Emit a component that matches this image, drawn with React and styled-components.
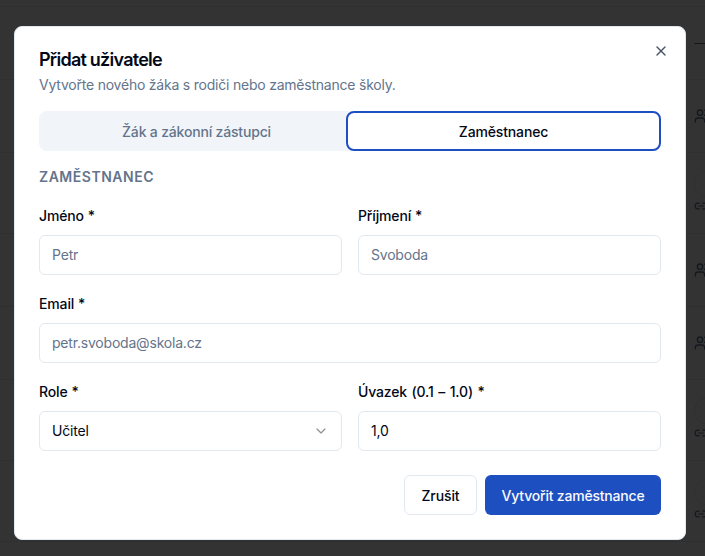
import styled, { createGlobalStyle } from "styled-components"
import { ChevronDown, Link2, Users, X } from "lucide-react"

const rows = [
	{ id: 1, height: 73, kind: "dash" },
	{ id: 2, height: 73, kind: "user" },
	{ id: 3, height: 81, kind: "link" },
	{ id: 4, height: 73, kind: "user" },
	{ id: 5, height: 73, kind: "user" },
	{ id: 6, height: 81, kind: "link" },
	{ id: 7, height: 81, kind: "link" },
]

function App() {
	return (
		<>
			<GlobalStyle />
			<Page>
				<TopRow />
				{rows.map((row) => (
					<Row key={row.id} $height={row.height}>
						{row.kind === "dash" && <Dash />}
						{row.kind === "user" && <Users size={16} strokeWidth={2} />}
						{row.kind === "link" && (
							<LinkCell>
								<Avatar />
								<Link2 size={14} strokeWidth={2} />
							</LinkCell>
						)}
					</Row>
				))}
			</Page>
			<Overlay />
			<Dialog>
				<CloseButton aria-label="Zavřít">
					<X size={16} strokeWidth={2} />
				</CloseButton>
				<Title>Přidat uživatele</Title>
				<Description>Vytvořte nového žáka s rodiči nebo zaměstnance školy.</Description>
				<Tabs>
					<Tab>Žák a zákonní zástupci</Tab>
					<ActiveTab>Zaměstnanec</ActiveTab>
				</Tabs>
				<SectionTitle>Zaměstnanec</SectionTitle>
				<FormGrid>
					<Field>
						<Label>Jméno *</Label>
						<Input placeholder="Petr" />
					</Field>
					<Field>
						<Label>Příjmení *</Label>
						<Input placeholder="Svoboda" />
					</Field>
					<WideField>
						<Label>Email *</Label>
						<Input placeholder="petr.svoboda@skola.cz" />
					</WideField>
					<Field>
						<Label>Role *</Label>
						<SelectBox>
							Učitel
							<ChevronDown size={16} strokeWidth={1.75} />
						</SelectBox>
					</Field>
					<Field>
						<Label $wordSpacing={1}>Úvazek (0.1 – 1.0) *</Label>
						<Input defaultValue="1,0" />
					</Field>
				</FormGrid>
				<Footer>
					<CancelButton>Zrušit</CancelButton>
					<SubmitButton>Vytvořit zaměstnance</SubmitButton>
				</Footer>
			</Dialog>
		</>
	)
}

export default App

const GlobalStyle = createGlobalStyle`
* {
	padding: 0;
	margin: 0;
	box-sizing: border-box;
}

html, body {
	height: 100%;
	overflow: hidden;
	background: #fff;
}

body {
	font-family: Inter, "Liberation Sans", sans-serif;
	color: #0f172a;
}

input, button {
	font-family: inherit;
}
`

const Page = styled.div`
	height: 556px;
	overflow: hidden;
	background: #fff;
`

const TopRow = styled.div`
	height: 7px;
	border-bottom: 1px solid #e2e8f0;
`

const Row = styled.div`
	height: ${(p) => p.$height}px;
	border-bottom: 1px solid #e2e8f0;
	padding-left: 694px;
	display: flex;
	align-items: center;
	color: #64748b;

	svg {
		flex-shrink: 0;
	}
`

const Dash = styled.div`
	width: 11px;
	height: 1px;
	background: #64748b;
`

const LinkCell = styled.div`
	flex-shrink: 0;
	margin-top: -4px;
	display: flex;
	flex-direction: column;
	gap: 1px;
`

const Avatar = styled.div`
	width: 28px;
	height: 28px;
	border: 1px solid #e2e8f0;
	border-radius: 50%;
`

const Overlay = styled.div`
	position: fixed;
	inset: 0;
	background: rgba(0, 0, 0, 0.8);
`

const Dialog = styled.div`
	position: fixed;
	left: 14px;
	top: 26px;
	width: 672px;
	height: 514px;
	background: #fff;
	border: 1px solid #e2e8f0;
	border-radius: 8px;
	padding: 24px;
	display: flex;
	flex-direction: column;
`

const CloseButton = styled.button`
	position: absolute;
	top: 16px;
	right: 16px;
	width: 16px;
	height: 16px;
	border: 0;
	background: none;
	color: #475569;
	display: flex;
`

const Title = styled.h2`
	font-size: 18px;
	line-height: 18px;
	font-weight: 600;
	letter-spacing: -0.75px;
	color: #020817;
`

const Description = styled.p`
	margin-top: 6px;
	font-size: 14px;
	line-height: 20px;
	letter-spacing: -0.22px;
	color: #64748b;
`

const Tabs = styled.div`
	margin-top: 16px;
	height: 40px;
	display: grid;
	grid-template-columns: 1fr 315px;
	background: #f1f5f9;
	border-radius: 8px;
`

const Tab = styled.button`
	border: 0;
	background: none;
	padding-left: 8px;
	font-size: 14px;
	font-weight: 500;
	letter-spacing: -0.18px;
	color: #64748b;
`

const ActiveTab = styled.button`
	background: #fff;
	border: 2px solid #1e4fc0;
	border-radius: 8px;
	font-size: 14px;
	font-weight: 500;
	letter-spacing: -0.15px;
	color: #020817;
`

const SectionTitle = styled.h3`
	margin-top: 16px;
	font-size: 14px;
	line-height: 20px;
	font-weight: 600;
	letter-spacing: 0.52px;
	text-transform: uppercase;
	color: #64748b;
`

const FormGrid = styled.div`
	margin-top: 16px;
	display: grid;
	grid-template-columns: 1fr 1fr;
	column-gap: 16px;
	row-gap: 16px;
`

const Field = styled.div`
	display: flex;
	flex-direction: column;
	gap: 8px;
`

const WideField = styled(Field)`
	grid-column: 1 / -1;
`

const Label = styled.label`
	height: 24px;
	padding-top: 2px;
	font-size: 14px;
	line-height: 22px;
	font-weight: 500;
	letter-spacing: -0.15px;
	word-spacing: ${(p) => p.$wordSpacing ?? 0.4}px;
	color: #020817;
`

const Input = styled.input`
	height: 40px;
	width: 100%;
	padding: 0 12px 1px;
	font-size: 14px;
	letter-spacing: -0.2px;
	color: #020817;
	background: #fff;
	border: 1px solid #e2e8f0;
	border-radius: 6px;
	outline: none;

	&::placeholder {
		color: #64748b;
		opacity: 1;
	}
`

const SelectBox = styled.div`
	height: 40px;
	padding: 0 12px 1px;
	font-size: 14px;
	letter-spacing: -0.2px;
	color: #020817;
	border: 1px solid #e2e8f0;
	border-radius: 6px;
	display: flex;
	align-items: center;
	justify-content: space-between;

	svg {
		opacity: 0.45;
	}
`

const Footer = styled.div`
	margin-top: 24px;
	display: flex;
	justify-content: flex-end;
	gap: 8px;
`

const CancelButton = styled.button`
	height: 40px;
	width: 73px;
	background: #fff;
	border: 1px solid #e2e8f0;
	border-radius: 6px;
	font-size: 14px;
	font-weight: 500;
	letter-spacing: -0.1px;
	color: #020817;
`

const SubmitButton = styled.button`
	height: 40px;
	width: 176px;
	background: #1e4fc0;
	border: 0;
	border-radius: 6px;
	font-size: 14px;
	font-weight: 500;
	letter-spacing: -0.2px;
	color: #f8fafc;
`
